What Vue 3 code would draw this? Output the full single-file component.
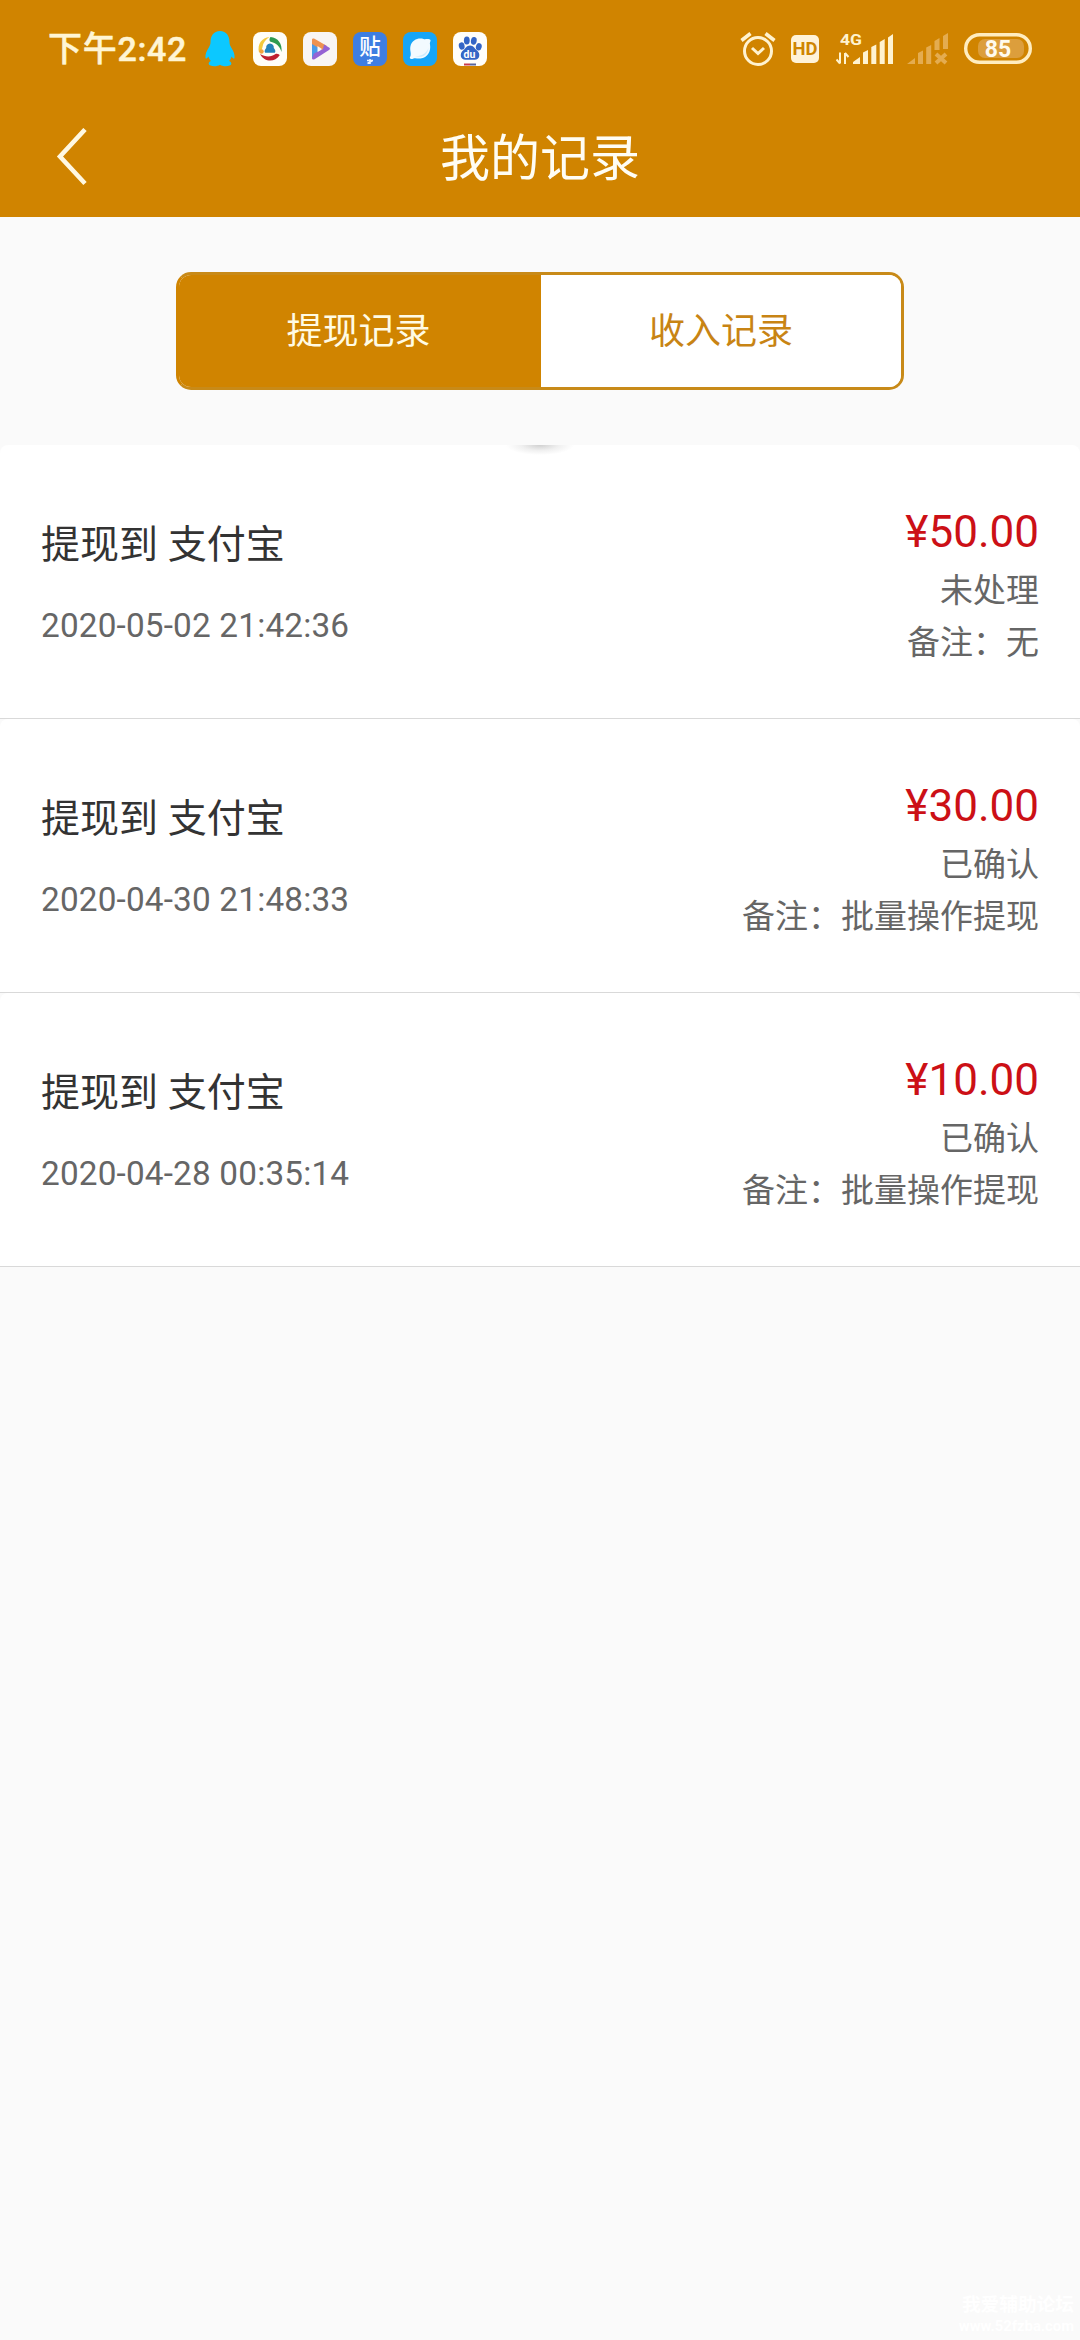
<script setup>
import { ref } from 'vue'

const tabs = ['提现记录', '收入记录']
const active = ref(0)

const records = [
  { title: '提现到 支付宝', time: '2020-05-02 21:42:36', amount: '¥50.00', status: '未处理', remark: '备注：无' },
  { title: '提现到 支付宝', time: '2020-04-30 21:48:33', amount: '¥30.00', status: '已确认', remark: '备注：批量操作提现' },
  { title: '提现到 支付宝', time: '2020-04-28 00:35:14', amount: '¥10.00', status: '已确认', remark: '备注：批量操作提现' },
]
</script>

<template>
  <div class="screen">
    <header class="header">
      <div class="status-bar">
        <span class="clock">下午2:42</span>
        <svg class="qq" width="30" height="36" viewBox="0 0 30 36">
          <path fill="#0cc8ff" d="M15 0C8.500 0 5.500 5 5.500 11c0 2-.5 3.500-1.700 5.500C1.500 20 0 23.500.5 27c.4 1.300 1.800.2 3-1.600.5 2 1.200 3.300 2.400 4.600-1.500.7-2.400 1.800-2.200 3 .3 2.500 8.500 3 11.300.7 2.800 2.300 11 1.800 11.300-.7.200-1.200-.7-2.300-2.200-3 1.200-1.300 1.900-2.600 2.400-4.600 1.200 1.800 2.600 2.900 3 1.600.5-3.500-1-7-3.300-10.500-1.200-2-1.700-3.500-1.700-5.500C24.500 5 21.500 0 15 0z" />
        </svg>
        <div class="apps">
          <svg width="34" height="34" viewBox="0 0 34 34">
            <rect width="34" height="34" rx="8" fill="#fffef8" />
            <path d="M6 20.500C4 12 9 5.500 16.500 5c-4 2.500-6.500 6-7 10-.5 2-1 4-3.500 5.500z" fill="#f4c93c" />
            <path d="M17.500 5C25 5.500 29.500 12 28.500 20c-1.500-5.500-5-9-11.500-10.500-1-1.500-.5-3.500.5-4.500z" fill="#2f9a4f" />
            <path d="M7 22c5 3 11 3.500 15.500 0 1.500-.8 4 .2 4.200 1.200C22 30.500 11.500 30.500 7 22z" fill="#bf2030" />
            <path d="M17 11.500c-2.800 0-4 2.200-3.800 4.500-1.400 1.800-2.200 3.600-1 4.800h9.600c1.200-1.200.4-3-1-4.800.2-2.300-1-4.500-3.800-4.500z" fill="#2682b8" />
            <circle cx="8.500" cy="19.500" r="2.200" fill="#f3a03c" />
          </svg>
          <svg width="34" height="34" viewBox="0 0 34 34">
            <rect width="34" height="34" rx="8" fill="#f8f5f4" />
            <path d="M9 11l6 3v7l-6 5.500z" fill="#4a9be8" />
            <path d="M9 7.500c.3-1.300 1.500-1.300 2.500-.7L24 14l-5 4L9 12z" fill="#ee9250" />
            <path d="M21 12.500l5 3c1.200.7 1.200 1.800 0 2.500L12 27c-1.800 1-3 .5-3-1l2-4.500 9-4.500z" fill="#9462d4" />
            <path d="M14.500 14l4.500 3-4.500 3z" fill="#f8f5f4" />
          </svg>
          <svg class="tieba" width="34" height="34" viewBox="0 0 34 34">
            <rect width="34" height="34" rx="8" fill="#3e7ee2" />
            <text x="17" y="21.800" text-anchor="middle" font-size="21.500" font-weight="500" fill="#fff" class="cjk">贴</text>
            <path d="M14 28.500h6M17 27v5M14.500 31.500l5-3" stroke="#e8f2ff" stroke-width="1.600" fill="none" />
          </svg>
          <svg width="34" height="34" viewBox="0 0 34 34">
            <rect width="34" height="34" rx="8" fill="#16a5f7" />
            <path d="M7.500 14C9 8 15 5.500 20.500 7c2 .6 3.500-.5 6.500.5 1.500 1-.5 2.500 0 5 1.200 7-2.500 13-9.500 14-3 .4-5-.8-7.500.2-3 .8-4-.7-2.500-2.700C8.500 21 6.500 18.500 7.500 14z" fill="#f2faff" />
            <path d="M12 24c6 .5 11-2 13.500-8-1 7-6 10.500-13.500 8z" fill="#cdebfc" />
          </svg>
          <svg width="34" height="34" viewBox="0 0 34 34">
            <rect width="34" height="34" rx="8" fill="#fffefa" />
            <g fill="#3465c6">
              <ellipse cx="8.700" cy="14" rx="2.900" ry="3.700" transform="rotate(-12 8.700 14)" />
              <ellipse cx="13.800" cy="8.500" rx="2.900" ry="3.900" />
              <ellipse cx="20.800" cy="8.800" rx="2.900" ry="3.900" transform="rotate(10 20.800 8.800)" />
              <ellipse cx="25.800" cy="14.800" rx="2.900" ry="3.700" transform="rotate(14 25.800 14.800)" />
              <path d="M17 13.500c3.500 0 4.500 3 7 5 4 3 2.700 9.500-2.500 9.300-2.500 0-6.500 0-9 0-5 0-6.300-6-2.500-9.300 2.500-2 3.500-5 7-5z" />
            </g>
            <text x="16.500" y="26.300" text-anchor="middle" font-size="10.500" font-weight="700" fill="#fff">du</text>
            <path d="M11 32.500h6" stroke="#c83c4a" stroke-width="2" />
            <path d="M17 32.500h6" stroke="#59679f" stroke-width="2" />
          </svg>
        </div>

        <svg class="alarm" width="36" height="36" viewBox="0 0 36 36" fill="none" stroke="#fff3d0" stroke-width="3">
          <circle cx="18" cy="20" r="13.500" />
          <path d="M1.500 9.500l9-7M34.500 9.500l-9-7" stroke-width="3.600" />
          <path d="M12 17l6 5.500 6-5.500" />
        </svg>
        <svg class="hd" width="28" height="28" viewBox="0 0 28 28">
          <rect width="28" height="28" rx="5" fill="#fff3d8" />
          <text x="14" y="20.300" text-anchor="middle" font-size="18" font-weight="700" textLength="25" lengthAdjust="spacingAndGlyphs" fill="#cf8500">HD</text>
        </svg>
        <svg class="signal" width="58" height="34" viewBox="0 0 58 34" fill="#fff3d0">
          <text x="4" y="12.500" font-size="15" font-weight="700" textLength="22" lengthAdjust="spacingAndGlyphs">4G</text>
          <path d="M4 20.500v11M.5 27.500l3.500 4M9 32V21M9 21l3.500 4" stroke="#fff3d0" stroke-width="2" fill="none" />
          <path d="M17 32v-2l7-5v7zM27 32V20.500l5-2.500v14zM35.300 32V15l5-2.500V32zM43.700 32V10l5-3v25zM52 32V5.500l5-3.500v30z" />
        </svg>
        <svg class="nosim" width="42" height="32" viewBox="0 0 42 32" fill="#e4ac50">
          <path d="M0 31l8-6v6zM11 31V20l5-2.500V31zM19.200 31V14.500L24.200 12v19zM27.500 17V8l5-3v12zM36 16V3l5-3v16z" />
          <path d="M29 21l10 9M39 21l-10 9" stroke="#e4ac50" stroke-width="4" />
        </svg>
        <svg class="battery" width="68" height="31" viewBox="0 0 68 31">
          <rect x="14" y="6" width="46" height="19" rx="7" fill="#dc9e3c" />
          <rect x="1.700" y="1.700" width="64.600" height="27.600" rx="13.800" fill="none" stroke="#ffedc0" stroke-width="3.400" />
          <text x="34" y="23.500" text-anchor="middle" font-size="23" font-weight="700" fill="#fffbee">85</text>
        </svg>
      </div>
      <div class="nav">
        <svg class="back" width="32" height="58" viewBox="0 0 32 58" fill="none" stroke="#fff8e2" stroke-width="4.600">
          <path d="M29 1.500L4 28.500l25 27" />
        </svg>
        <h1 class="title">我的记录</h1>
      </div>
    </header>

    <div class="tabs">
      <button
        v-for="(tab, i) in tabs"
        :key="tab"
        class="tab"
        :class="{ active: active === i }"
        @click="active = i"
      >{{ tab }}</button>
    </div>

    <main class="list">
      <article v-for="r in records" :key="r.time" class="record">
        <div class="info">
          <div class="name">{{ r.title }}</div>
          <div class="time">{{ r.time }}</div>
        </div>
        <div class="detail">
          <div class="amount">{{ r.amount }}</div>
          <div class="note">{{ r.status }}</div>
          <div class="note">{{ r.remark }}</div>
        </div>
      </article>
    </main>

    <footer class="mark">
      <div class="mark-name">我爱辅助论坛</div>
      <div class="mark-url">www.52fzba.com</div>
    </footer>
  </div>
</template>

<style>
body {
  margin: 0;
  background: #fafafa;
}
</style>

<style scoped>
.screen {
  display: flex;
  flex-direction: column;
  width: 1080px;
  height: 2340px;
  overflow: hidden;
  background: #fafafa;
  font-family: Roboto, "Noto Sans CJK SC", sans-serif;
}
.cjk {
  font-family: "Noto Sans CJK SC", sans-serif;
}
.header {
  height: 217px;
  flex: none;
  background: #d08400;
}
.status-bar {
  display: flex;
  align-items: center;
  box-sizing: border-box;
  height: 97px;
  padding: 0 48px;
}
.status-bar svg {
  flex: none;
  display: block;
}
.status-bar .tieba {
  overflow: visible;
}
.clock {
  width: 157px;
  font-size: 34px;
  font-weight: 500;
  line-height: 40px;
  letter-spacing: 0.7px;
  white-space: nowrap;
  color: #fff5d4;
  -webkit-text-stroke: 0.5px #fff5d4;
}
.apps {
  display: flex;
  gap: 16px;
  margin-left: 18px;
}
.alarm {
  margin-left: auto;
}
.hd {
  margin-left: 15px;
}
.signal {
  margin-left: 17px;
}
.nosim {
  margin-left: 13px;
}
.battery {
  margin-left: 15px;
}
.nav {
  display: grid;
  grid-template-columns: 100px 1fr 100px;
  align-items: center;
  height: 120px;
}
.back {
  margin-left: 56px;
}
.title {
  margin: 0;
  padding-top: 3px;
  text-align: center;
  font-size: 50px;
  font-weight: 400;
  line-height: 72px;
  color: #fffdf4;
}
.tabs {
  display: flex;
  flex: none;
  box-sizing: border-box;
  width: 728px;
  height: 118px;
  margin: 55px auto 55px;
  overflow: hidden;
  border: 3px solid #c88a18;
  border-radius: 15px;
  background: #fff;
}
.tabs:has(.tab.active:first-child) {
  border-left-color: #d08400;
}
.tab {
  flex: 1;
  padding: 2px 0 0;
  border: 0;
  background: #fff;
  font: 400 36px/110px Roboto, "Noto Sans CJK SC", sans-serif;
  color: #c88414;
}
.tab.active {
  padding-right: 2px;
  background: #d08400;
  box-shadow: 0 0 0 3px #d08400;
  color: #fffbe4;
}
.tab.active:first-child {
  flex: 0 0 362px;
  padding-right: 3px;
  box-shadow: none;
}
.list {
  flex: none;
}
.record {
  display: flex;
  justify-content: space-between;
  box-sizing: border-box;
  height: 274px;
  padding: 0 41px;
  border-bottom: 1px solid #d9d9d9;
  border-radius: 8px 8px 0 0;
  background: #fff;
}
.record:first-child {
  background: radial-gradient(ellipse 34px 10px at 540px 0, #d0d0d0, #f0f0f0 55%, #fff);
}
.info {
  padding-top: 72px;
}
.name {
  font-size: 39px;
  line-height: 56px;
  color: #333;
}
.time {
  margin-top: 29px;
  font-size: 33.300px;
  line-height: 48px;
  letter-spacing: 0.18px;
  color: #666;
}
.detail {
  padding-top: 57px;
  text-align: right;
}
.amount {
  height: 63px;
  font-size: 44px;
  line-height: 60px;
  color: #cc1016;
}
.note {
  font-size: 33px;
  line-height: 52px;
  color: #666;
}
.mark {
  margin: auto 6px 4px auto;
  font-weight: 700;
  color: #fff;
  text-align: right;
}
.mark-name {
  font-size: 18.700px;
  line-height: 24px;
}
.mark-url {
  font-size: 14.800px;
  line-height: 19px;
}
</style>
